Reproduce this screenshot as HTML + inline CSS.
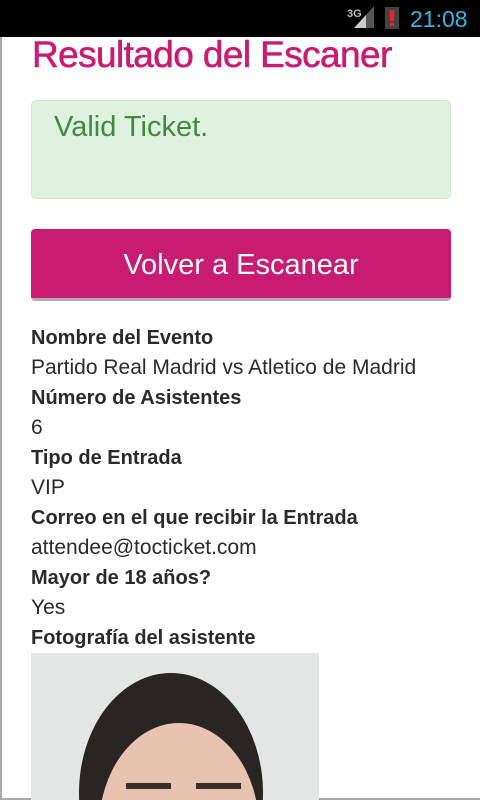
<!DOCTYPE html>
<html style="overflow:hidden"><head><meta charset="utf-8"><style>
*{margin:0;padding:0;box-sizing:border-box}
html,body{width:480px;height:800px;overflow:hidden}
body{background:#fff;font-family:"Liberation Sans",sans-serif;position:relative}
.sb{position:absolute;left:0;top:0;width:480px;height:37px;background:#000}
.frame{position:absolute;left:0;top:37px;width:480px;height:763px;border-left:2px solid #a8a8a8;border-bottom:2px solid #a8a8a8}
.t{position:absolute;left:32px;top:34px;font-size:37px;color:#c81c72;letter-spacing:-0.6px;white-space:nowrap;-webkit-text-stroke:0.6px #c81c72}
.ok{position:absolute;left:31px;top:100px;width:420px;height:99px;background:#dff2df;border:1px solid #d3e8c8;border-radius:5px}
.ok span{position:absolute;left:22px;top:10px;font-size:29px;color:#3e8a3e}
.btn{position:absolute;left:31px;top:229px;width:420px;height:72px;background:#c81c72;border-radius:4px;border-bottom:3px solid #b9a8b2;color:#fff;font-size:29px;text-align:center;line-height:72px}
.l{position:absolute;left:31px;font-size:21px;color:#2a2a2a;white-space:nowrap}
.b{font-weight:bold;font-size:20px}
.ph{position:absolute;left:31px;top:653px;width:288px;height:147px;background:#e4e6e5;overflow:hidden}
</style></head><body>
<div class="sb">
<svg width="480" height="37" style="position:absolute;left:0;top:0">
<text x="347" y="17" font-size="11" fill="#bbb" font-family="Liberation Sans" font-weight="bold">3G</text>
<polygon points="354,28 374,6 374,28" fill="#555"/>
<polygon points="354,28 366,15 366,28" fill="#ccc"/>
<rect x="385" y="7" width="14" height="22" fill="#444"/>
<rect x="390" y="10" width="4" height="11" fill="#e22"/><rect x="390" y="23" width="4" height="3" fill="#e22"/>
<text x="410" y="27" font-size="23" fill="#33b5e5" font-family="Liberation Sans">21:08</text>
</svg></div>
<div class="frame"></div>
<div class="t">Resultado del Escaner</div>
<div class="ok"><span>Valid Ticket.</span></div>
<div class="btn">Volver a Escanear</div>
<div class="l b" style="top:327px">Nombre del Evento</div>
<div class="l" style="top:356px">Partido Real Madrid vs Atletico de Madrid</div>
<div class="l b" style="top:387px">Número de Asistentes</div>
<div class="l" style="top:416px">6</div>
<div class="l b" style="top:447px">Tipo de Entrada</div>
<div class="l" style="top:476px">VIP</div>
<div class="l b" style="top:507px">Correo en el que recibir la Entrada</div>
<div class="l" style="top:536px">attendee@tocticket.com</div>
<div class="l b" style="top:567px">Mayor de 18 años?</div>
<div class="l" style="top:596px">Yes</div>
<div class="l b" style="top:627px">Fotografía del asistente</div>
<div class="ph"><svg width="288" height="147">
<ellipse cx="140" cy="140" rx="92" ry="120" fill="#2a2422"/>
<ellipse cx="148" cy="175" rx="80" ry="105" fill="#e8c4b0"/>
<rect x="95" y="130" width="45" height="6" fill="#3a2e28"/><rect x="165" y="130" width="45" height="6" fill="#3a2e28"/>
</svg></div>
</body></html>
